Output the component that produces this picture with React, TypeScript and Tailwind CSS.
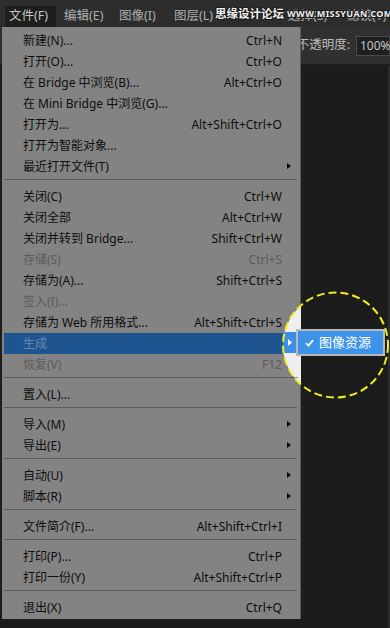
import React from "react";

type Item = {
  label: string;
  keys?: string;
  sub?: boolean;
  disabled?: boolean;
  active?: boolean;
};

const groups: Item[][] = [
  [
    { label: "新建(N)...", keys: "Ctrl+N" },
    { label: "打开(O)...", keys: "Ctrl+O" },
    { label: "在 Bridge 中浏览(B)...", keys: "Alt+Ctrl+O" },
    { label: "在 Mini Bridge 中浏览(G)..." },
    { label: "打开为...", keys: "Alt+Shift+Ctrl+O" },
    { label: "打开为智能对象..." },
    { label: "最近打开文件(T)", sub: true },
  ],
  [
    { label: "关闭(C)", keys: "Ctrl+W" },
    { label: "关闭全部", keys: "Alt+Ctrl+W" },
    { label: "关闭并转到 Bridge...", keys: "Shift+Ctrl+W" },
    { label: "存储(S)", keys: "Ctrl+S", disabled: true },
    { label: "存储为(A)...", keys: "Shift+Ctrl+S" },
    { label: "签入(I)...", disabled: true },
    { label: "存储为 Web 所用格式...", keys: "Alt+Shift+Ctrl+S" },
    { label: "生成", sub: true, disabled: true, active: true },
    { label: "恢复(V)", keys: "F12", disabled: true },
  ],
  [{ label: "置入(L)..." }],
  [
    { label: "导入(M)", sub: true },
    { label: "导出(E)", sub: true },
  ],
  [
    { label: "自动(U)", sub: true },
    { label: "脚本(R)", sub: true },
  ],
  [{ label: "文件简介(F)...", keys: "Alt+Shift+Ctrl+I" }],
  [
    { label: "打印(P)...", keys: "Ctrl+P" },
    { label: "打印一份(Y)", keys: "Alt+Shift+Ctrl+P" },
  ],
  [{ label: "退出(X)", keys: "Ctrl+Q" }],
];

// 文字(Y) sits under the watermark and is not visible, so it is only a gap here
const menubar = [
  { label: "文件(F)", w: "w-[51px] mr-[4px]", open: true },
  { label: "编辑(E)", w: "w-[55px]" },
  { label: "图像(I)", w: "w-[55px]" },
  { label: "图层(L)", w: "w-[55px]" },
  { label: "", w: "w-[59px]" },
  { label: "选择(S)", w: "w-[59px]" },
  { label: "滤镜(T)", w: "w-[43px]" },
];

const outline =
  "[text-shadow:-1px_0_#1a1a1a,1px_0_#1a1a1a,0_-1px_#1a1a1a,0_1px_#1a1a1a,1px_1px_#1a1a1a,-1px_-1px_#1a1a1a]";

function Row({ item }: { item: Item }) {
  const color = item.active
    ? "text-[#6c89ab]"
    : item.disabled
      ? "text-[#5c5c5c]"
      : "text-[#0e0e0e]";
  return (
    <div
      className={`relative mx-[2px] mr-[3px] flex h-[21px] items-center pl-[19px] pr-[15px] ${color} ${
        item.active ? "bg-[#1e5591]" : ""
      }`}
    >
      <span className="flex-1 whitespace-nowrap">{item.label}</span>
      {item.keys ? <span className="whitespace-nowrap">{item.keys}</span> : null}
      {item.sub ? (
        <span className="absolute right-[6px] top-[7px] h-0 w-0 border-y-[3.5px] border-l-[4px] border-y-transparent border-l-[#0a0a0a]" />
      ) : null}
    </div>
  );
}

function Spotlight() {
  return (
    <svg className="pointer-events-none absolute inset-0" width={390} height={628}>
      <defs>
        <clipPath id="spot">
          <circle cx={335.5} cy={345} r={52.5} />
        </clipPath>
      </defs>
      <g clipPath="url(#spot)">
        <rect x={280} y={290} width={21} height={112} fill="#efefef" />
        <rect x={280} y={332} width={18} height={21} fill="#3c8fe6" />
        <rect x={280} y={377} width={18} height={1} fill="#8e8e8e" />
        <rect x={301} y={290} width={90} height={112} fill="#1c1c1c" />
        <path d="M288 339 L292 342.5 L288 346 Z" fill="#ffffff" />
      </g>
      <circle
        cx={335.5}
        cy={345}
        r={52.5}
        fill="none"
        stroke="#f4ee1c"
        strokeWidth={2}
        strokeDasharray="8 4"
      />
    </svg>
  );
}

export default function App() {
  return (
    <div className="relative h-[628px] w-[390px] overflow-hidden bg-[#1c1c1c] font-['Noto_Sans','Noto_Sans_CJK_SC',sans-serif] text-[12px]">
      {/* menu bar */}
      <div className="flex h-[27px] items-end overflow-hidden bg-[#2d2d2d] pl-[5px]">
        {menubar.map((m, i) => (
          <div
            key={i}
            className={`${m.w} flex h-[21px] shrink-0 items-center whitespace-nowrap pl-[4px] text-[12.5px] text-[#adadad] ${
              m.open ? "rounded-t-[2px] bg-[#1e1e1e] text-[#c4c4c4]" : ""
            }`}
          >
            {m.label}
          </div>
        ))}
      </div>

      {/* options bar */}
      <div className="flex h-[38px] items-center justify-end border-b border-[#202020] bg-[#303030]">
        <span className="mr-[6px] text-[12.5px] text-[#bcbcbc]">不透明度:</span>
        <div className="flex h-[20px] w-[34px] items-center border border-[#4a4a4a] bg-[#1f1f1f] pl-[3px] text-[12px] text-[#c6c6c6]">
          100%
        </div>
      </div>

      {/* right edge strip */}
      <div className="absolute bottom-0 right-0 top-[66px] w-[2px] bg-[#2c2c2c]" />

      {/* file menu */}
      <div className="absolute left-[2px] top-[27px] w-[299px] border-r border-[#5a5a5a] bg-[#838383] pb-[1px] pt-[3px]">
        {groups.map((g, gi) => (
          <div key={gi}>
            {gi > 0 ? <div className="mx-[2px] mr-[3px] mb-[6px] mt-[2px] h-px bg-[#5c5c5c]" /> : null}
            {g.map((item) => (
              <Row key={item.label} item={item} />
            ))}
          </div>
        ))}
      </div>

      <Spotlight />

      {/* submenu */}
      <div className="absolute left-[296px] top-[329px] flex h-[27px] w-[89px] items-center gap-[5px] border-2 border-[#b9b9b9] bg-[#3d93ea] pl-[7px] text-[13px] text-white">
        <svg width={9} height={8} viewBox="0 0 9 8">
          <path d="M1 4.2 L3.4 6.6 L8 1.2" fill="none" stroke="#ffffff" strokeWidth={1.8} />
        </svg>
        <span className="whitespace-nowrap">图像资源</span>
      </div>

      {/* watermark */}
      <div className="pointer-events-none absolute left-[215px] top-[5px] flex items-center gap-[3px] whitespace-nowrap text-[#f0f0f0]">
        <span className={`text-[11.5px] font-bold ${outline}`}>思缘设计论坛</span>
        <span className={`text-[9px] font-bold tracking-[0.4px] ${outline}`}>WWW.MISSYUAN.COM</span>
      </div>
    </div>
  );
}
